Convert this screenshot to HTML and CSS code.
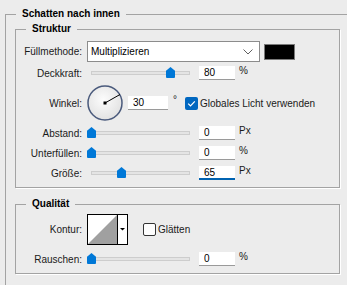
FILE: index.html
```html
<!DOCTYPE html>
<html lang="de">

<head>
    <meta charset="UTF-8">
    <title>Schatten nach innen</title>
    <link rel="stylesheet" href="styles.css">
</head>

<body>
    <fieldset class="panel">
        <legend>Schatten nach innen</legend>

        <fieldset class="group">
            <legend>Struktur</legend>
            <div class="row row-mode">
                <label class="lbl">Füllmethode:</label>
                <div class="select">
                    <span>Multiplizieren</span>
                    <svg class="chevron" width="10" height="6" viewBox="0 0 10 6">
                        <path d="M0.5 0.5 L5 5 L9.5 0.5" fill="none" stroke="#606060" stroke-width="1"/>
                    </svg>
                </div>
                <div class="swatch"></div>
            </div>
            <div class="row">
                <label class="lbl">Deckkraft:</label>
                <div class="slider"><div class="track"></div><div class="thumb" style="left: 79px"></div></div>
                <input class="num" type="text" value="80">
                <span class="unit">%</span>
            </div>
            <div class="row row-angle">
                <label class="lbl">Winkel:</label>
                <svg class="dial" width="36" height="36" viewBox="0 0 36 36">
                    <defs>
                        <radialGradient id="dialFill" cx="45%" cy="40%" r="60%">
                            <stop offset="0" stop-color="#fcfcfc"/>
                            <stop offset="1" stop-color="#e2e2e2"/>
                        </radialGradient>
                    </defs>
                    <circle cx="18" cy="18" r="17" fill="url(#dialFill)" stroke="#4a5a7c" stroke-width="1.5"/>
                    <line x1="18" y1="18" x2="33" y2="9.5" stroke="#000" stroke-width="1"/>
                    <rect x="16.5" y="16.5" width="3" height="3" fill="#000"/>
                </svg>
                <input class="num num-angle" type="text" value="30">
                <span class="deg">°</span>
                <span class="check on">
                    <svg width="13" height="13" viewBox="0 0 13 13">
                        <path d="M3.2 6.6 L5.5 8.9 L9.8 4.3" fill="none" stroke="#fff" stroke-width="1.2"/>
                    </svg>
                </span>
                <span class="check-text">Globales Licht verwenden</span>
            </div>
            <div class="row">
                <label class="lbl">Abstand:</label>
                <div class="slider"><div class="track"></div><div class="thumb" style="left: 0px"></div></div>
                <input class="num" type="text" value="0">
                <span class="unit">Px</span>
            </div>
            <div class="row">
                <label class="lbl">Unterfüllen:</label>
                <div class="slider"><div class="track"></div><div class="thumb" style="left: 0px"></div></div>
                <input class="num" type="text" value="0">
                <span class="unit">%</span>
            </div>
            <div class="row">
                <label class="lbl">Größe:</label>
                <div class="slider"><div class="track"></div><div class="thumb" style="left: 30px"></div></div>
                <input class="num focus" type="text" value="65">
                <span class="unit">Px</span>
            </div>
        </fieldset>

        <fieldset class="group group-quality">
            <legend>Qualität</legend>
            <div class="row row-contour">
                <label class="lbl">Kontur:</label>
                <svg class="contour" width="41" height="31" viewBox="0 0 41 31">
                    <rect x="0.5" y="0.5" width="40" height="30" fill="#fff" stroke="#000"/>
                    <polygon points="1,30 30,1 30,30" fill="#a0a0a0"/>
                    <line x1="30.5" y1="1" x2="30.5" y2="30" stroke="#000"/>
                    <polygon points="33,14 38,14 35.5,16.5" fill="#000"/>
                </svg>
                <span class="check"></span>
                <span class="check-text">Glätten</span>
            </div>
            <div class="row">
                <label class="lbl">Rauschen:</label>
                <div class="slider"><div class="track"></div><div class="thumb" style="left: 0px"></div></div>
                <input class="num" type="text" value="0">
                <span class="unit">%</span>
            </div>
        </fieldset>
    </fieldset>
</body>

</html>
```

FILE: styles.css
```css
body {
    margin: 0;
    background: #ececec;
    font-family: "Liberation Sans", Arial, sans-serif;
    font-size: 10px;
    color: #1a1a1a;
    overflow: hidden;
}
fieldset {
    margin: 0;
    min-width: 0;
    border: 1px solid #a3a3a3;
    box-shadow: 1px 1px 0 #fff;
}
legend {
    padding: 0 6px;
    font-weight: bold;
    color: #000;
    line-height: 14px;
}
.panel {
    margin: 7px 0 0 5px;
    padding: 1px 7px 11px 9px;
    border-right: 0;
    border-bottom: 0;
    box-shadow: none;
}
.panel > legend {
    margin-left: 1px;
}
.group {
    padding: 4px 0 4px 0;
}
.group > legend {
    margin-left: 10px;
}
.group-quality {
    margin-top: 9px;
    padding: 2px 0 4px 0;
}
.row {
    display: flex;
    align-items: center;
    height: 20px;
}
.row-mode {
    height: 23px;
}
.row-angle {
    height: 40px;
}
.row-contour {
    height: 33px;
    margin-bottom: 3px;
}
.lbl {
    width: 66px;
    margin-right: 5px;
    text-align: right;
    white-space: nowrap;
}
.select {
    box-sizing: border-box;
    width: 173px;
    height: 21px;
    padding: 0 3px 0 3px;
    display: flex;
    align-items: center;
    justify-content: space-between;
    background: #fff;
    border: 1px solid #8c8c8c;
    color: #000;
}
.chevron {
    margin-right: 3px;
}
.swatch {
    box-sizing: border-box;
    width: 31px;
    height: 16px;
    margin-left: 4px;
    background: #000;
    border: 1px solid #7a7a7a;
}
.slider {
    position: relative;
    width: 108px;
    height: 14px;
}
.track {
    position: absolute;
    left: 4px;
    right: 5px;
    top: 5px;
    height: 2px;
    background: #e4e4e4;
    border: 1px solid #cdcdcd;
}
.thumb {
    position: absolute;
    top: 1px;
    width: 9px;
    height: 11px;
    background: #0078d7;
    clip-path: polygon(50% 0, 100% 35%, 100% 100%, 0 100%, 0 35%);
    border-radius: 1px;
}
.num {
    box-sizing: border-box;
    width: 36px;
    height: 14px;
    margin: 0 0 0 4px;
    padding: 0 0 0 5px;
    border: none;
    border-bottom: 1px solid #9a9a9a;
    background: #fff;
    font-family: inherit;
    font-size: 10px;
    color: #000;
    outline: none;
}
.num.focus {
    border-bottom: 2px solid #0063b1;
}
.num-angle {
    width: 40px;
    margin-left: 5px;
}
.unit {
    margin-left: 4px;
    align-self: flex-start;
    margin-top: 2px;
}
.deg {
    margin-left: 5px;
    width: 8px;
    align-self: center;
    margin-bottom: 8px;
}
.check {
    box-sizing: border-box;
    width: 13px;
    height: 13px;
    margin-left: 4px;
    border: 1px solid #333;
    border-radius: 2px;
    background: #fdfdfd;
    display: flex;
}
.check.on {
    border: none;
    background: #0067c0;
}
.check-text {
    margin-left: 2px;
}
.contour {
    display: block;
}
.row-contour .check {
    margin-left: 15px;
}
```
